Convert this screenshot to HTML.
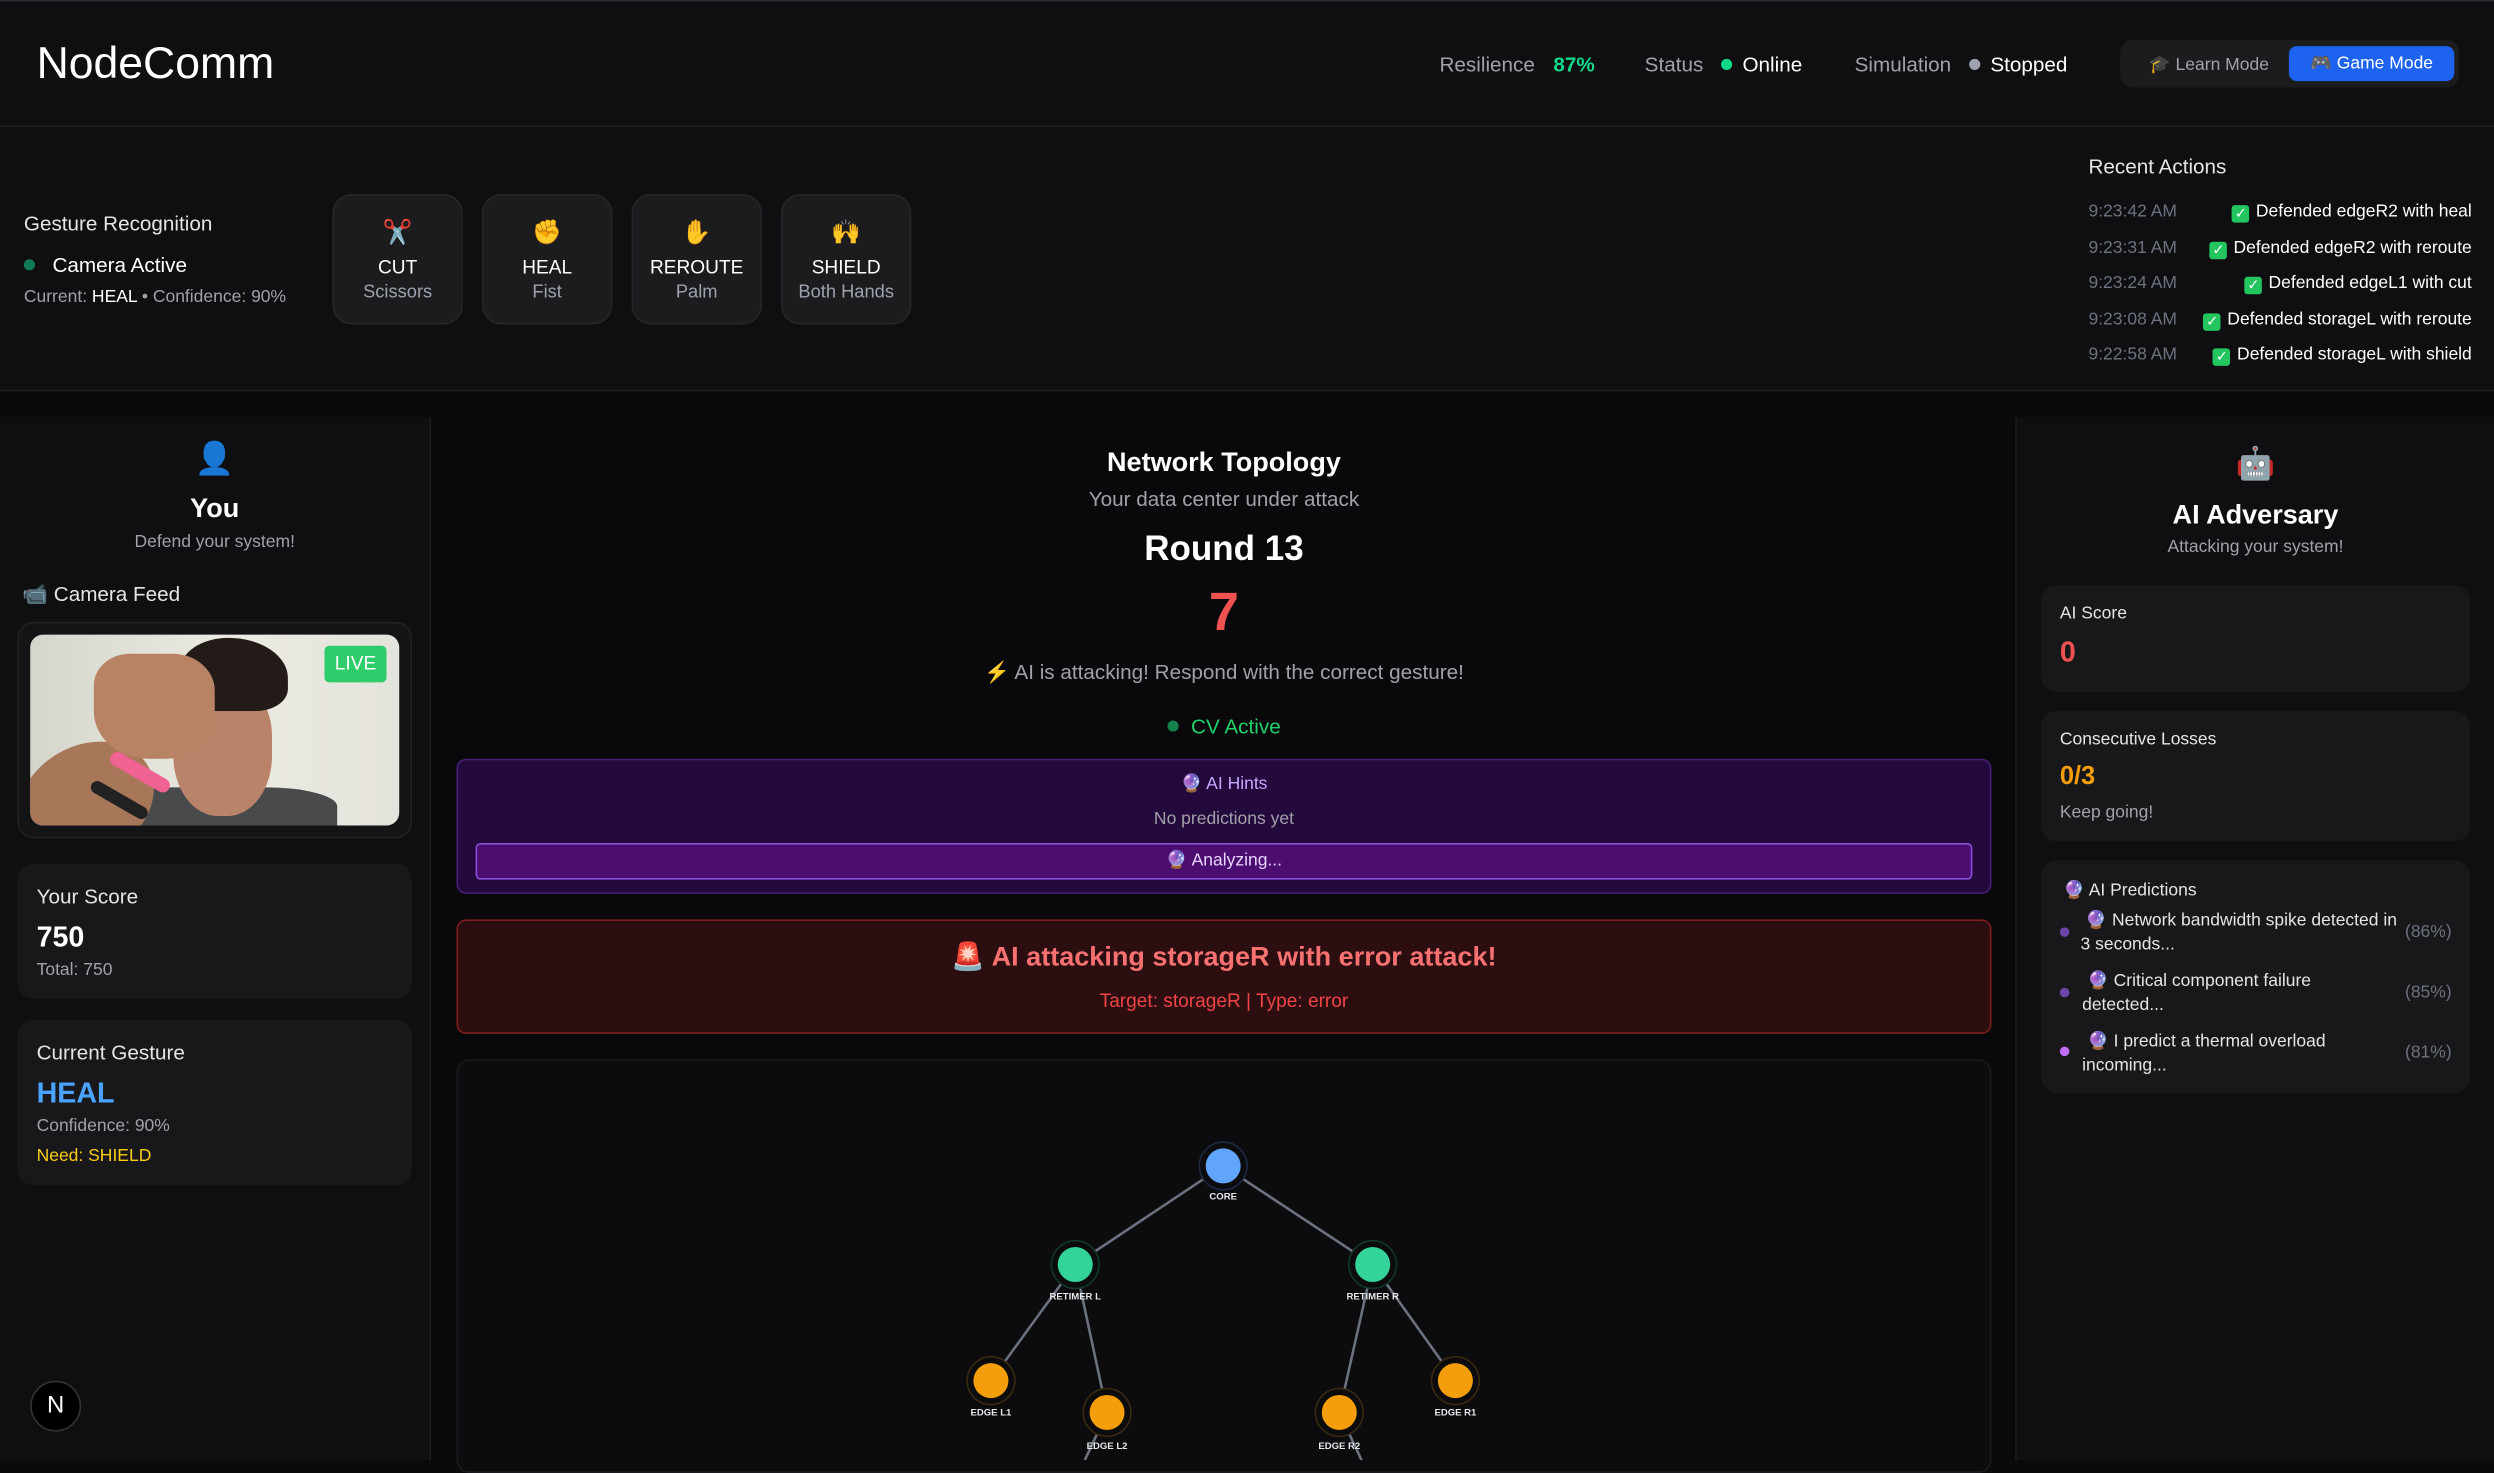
<!DOCTYPE html>
<html><head><meta charset="utf-8">
<style>
html,body{margin:0;padding:0;background:#0a0a0c;overflow:hidden}
body{width:2494px;height:1459px}
#s{position:absolute;left:0;top:0;width:1568px;height:918px;transform:scale(1.5906);transform-origin:0 0;font-family:"Liberation Sans",sans-serif;color:#fff;background:#09090b}
.a{position:absolute}
.c{text-align:center}
.card{position:absolute;background:#18181b;border-radius:10px}
.gc{position:absolute;top:122px;width:82px;height:82px;background:#1c1c1f;border:1px solid #26262a;border-radius:12px;text-align:center;box-sizing:border-box}
.gc .e{margin-top:14px;font-size:15px;height:20px}
.gc .t{font-size:12px;margin-top:4px}
.gc .s{font-size:11.5px;color:#9ca3af;margin-top:3px}
.ra{position:absolute;right:14px;font-size:11px;white-space:nowrap}
.tm{position:absolute;left:1313px;font-size:11px;color:#6b7280}
.chk{display:inline-block;width:11px;height:11px;background:#22c55e;border-radius:2px;color:#fff;font-size:9px;line-height:11px;text-align:center;vertical-align:-1px;margin-right:4px}
</style></head><body><div id="s">
<!-- header -->
<div class="a" style="left:0;top:0;width:1568px;height:80px;background:#0f0f11;border-top:1px solid #2a2a2e;border-bottom:1px solid #1f1f23;box-sizing:border-box"></div>
<div class="a" style="left:23px;top:24px;font-size:28px;color:#fff">NodeComm</div>
<div class="a" style="left:905px;top:33px;font-size:13px;color:#a1a1aa">Resilience <span style="color:#10d98a;font-weight:bold;margin-left:8px">87%</span></div>
<div class="a" style="left:1034px;top:33px;font-size:13px;color:#a1a1aa">Status <span style="display:inline-block;width:7px;height:7px;border-radius:50%;background:#10d98a;margin:0 6px 1px 8px"></span><span style="color:#fff">Online</span></div>
<div class="a" style="left:1166px;top:33px;font-size:13px;color:#a1a1aa">Simulation <span style="display:inline-block;width:7px;height:7px;border-radius:50%;background:#9ca3af;margin:0 6px 1px 8px"></span><span style="color:#fff">Stopped</span></div>
<div class="a" style="left:1333px;top:25px;width:213px;height:30px;background:#1c1c1f;border-radius:8px"></div>
<div class="a" style="left:1351px;top:34px;font-size:11px;color:#a1a1aa">🎓 Learn Mode</div>
<div class="a" style="left:1439px;top:29px;width:104px;height:22px;background:#1d63f0;border-radius:5px;font-size:11px;line-height:22px;text-align:center">🎮 Game Mode</div>
<!-- gesture band -->
<div class="a" style="left:0;top:80px;width:1568px;height:166px;background:#0f0f11;border-bottom:1px solid #1f1f23;box-sizing:border-box"></div>
<div class="a" style="left:15px;top:133px;font-size:13px;color:#e5e5e5">Gesture Recognition</div>
<div class="a" style="left:15px;top:159px;font-size:13px;color:#fff"><span style="display:inline-block;width:7px;height:7px;border-radius:50%;background:#0f7a55;margin-right:11px;vertical-align:1px"></span>Camera Active</div>
<div class="a" style="left:15px;top:181px;font-size:11px;color:#a1a1aa">Current: <span style="color:#fff">HEAL</span> • Confidence: 90%</div>
<div class="gc" style="left:209px"><div class="e">✂️</div><div class="t">CUT</div><div class="s">Scissors</div></div>
<div class="gc" style="left:303px"><div class="e">✊</div><div class="t">HEAL</div><div class="s">Fist</div></div>
<div class="gc" style="left:397px"><div class="e">✋</div><div class="t">REROUTE</div><div class="s">Palm</div></div>
<div class="gc" style="left:491px"><div class="e">🙌</div><div class="t">SHIELD</div><div class="s">Both Hands</div></div>
<div class="a" style="left:1313px;top:97px;font-size:13px;color:#e5e5e5">Recent Actions</div>
<div class="tm" style="top:127px">9:23:42 AM</div><div class="ra" style="top:127px"><span class="chk">✓</span>Defended edgeR2 with heal</div>
<div class="tm" style="top:150px">9:23:31 AM</div><div class="ra" style="top:150px"><span class="chk">✓</span>Defended edgeR2 with reroute</div>
<div class="tm" style="top:172px">9:23:24 AM</div><div class="ra" style="top:172px"><span class="chk">✓</span>Defended edgeL1 with cut</div>
<div class="tm" style="top:195px">9:23:08 AM</div><div class="ra" style="top:195px"><span class="chk">✓</span>Defended storageL with reroute</div>
<div class="tm" style="top:217px">9:22:58 AM</div><div class="ra" style="top:217px"><span class="chk">✓</span>Defended storageL with shield</div>
<!-- left panel -->
<div class="a" style="left:0;top:262px;width:270px;height:656px;background:#0f0f11;border-right:1px solid #1c1c1f"></div>
<div class="a c" style="left:0;top:276px;width:270px;font-size:20px">👤</div>
<div class="a c" style="left:0;top:310px;width:270px;font-size:17px;font-weight:bold">You</div>
<div class="a c" style="left:0;top:335px;width:270px;font-size:11px;color:#a1a1aa">Defend your system!</div>
<div class="a" style="left:14px;top:366px;font-size:13px;color:#e5e5e5">📹 Camera Feed</div>
<div class="card" style="left:11px;top:391px;width:248px;height:136px;background:#141416;border:1px solid #222226;box-sizing:border-box"></div>
<div class="a" style="left:19px;top:399px;width:232px;height:120px;border-radius:8px;overflow:hidden;background:linear-gradient(90deg,#d4d6cc,#ecebe2 55%,#e4e3dc)">
 <div class="a" style="left:43px;top:96px;width:150px;height:40px;border-radius:30% 30% 0 0;background:#484a4c"></div>
 <div class="a" style="left:90px;top:30px;width:62px;height:84px;border-radius:40% 40% 45% 45%;background:#b9836a"></div>
 <div class="a" style="left:94px;top:2px;width:68px;height:46px;border-radius:45% 55% 30% 20%;background:#231b17"></div>
 <div class="a" style="left:-10px;top:70px;width:90px;height:70px;border-radius:50%;background:#a87658;transform:rotate(-30deg)"></div>
 <div class="a" style="left:40px;top:12px;width:76px;height:66px;border-radius:30% 35% 40% 45%;background:#b88264"></div>
 <div class="a" style="left:48px;top:82px;width:42px;height:9px;background:#f06292;transform:rotate(30deg);border-radius:5px"></div>
 <div class="a" style="left:36px;top:100px;width:40px;height:8px;background:#222;transform:rotate(30deg);border-radius:4px"></div>
 <div class="a" style="left:185px;top:7px;width:39px;height:23px;background:#2ecc6a;border-radius:3px;font-size:12px;line-height:23px;text-align:center">LIVE</div>
</div>
<div class="card" style="left:11px;top:543px;width:248px;height:85px"></div>
<div class="a" style="left:23px;top:556px;font-size:13px;color:#e5e5e5">Your Score</div>
<div class="a" style="left:23px;top:579px;font-size:18px;font-weight:bold">750</div>
<div class="a" style="left:23px;top:604px;font-size:11px;color:#a1a1aa">Total: 750</div>
<div class="card" style="left:11px;top:641px;width:248px;height:104px"></div>
<div class="a" style="left:23px;top:654px;font-size:13px;color:#e5e5e5">Current Gesture</div>
<div class="a" style="left:23px;top:677px;font-size:18px;font-weight:bold;color:#4aa3ff">HEAL</div>
<div class="a" style="left:23px;top:702px;font-size:11px;color:#a1a1aa">Confidence: 90%</div>
<div class="a" style="left:23px;top:721px;font-size:11px;color:#facc15">Need: SHIELD</div>
<div class="a" style="left:19px;top:868px;width:32px;height:32px;border-radius:50%;background:#000;border:1px solid #333;box-sizing:border-box;font-size:15px;line-height:30px;text-align:center">N</div>
<!-- center -->
<div class="a c" style="left:287px;top:281px;width:965px;font-size:17px;font-weight:bold">Network Topology</div>
<div class="a c" style="left:287px;top:306px;width:965px;font-size:13px;color:#a1a1aa">Your data center under attack</div>
<div class="a c" style="left:287px;top:332px;width:965px;font-size:22px;font-weight:bold">Round 13</div>
<div class="a c" style="left:287px;top:366px;width:965px;font-size:34px;font-weight:bold;color:#f05252">7</div>
<div class="a c" style="left:287px;top:415px;width:965px;font-size:13px;color:#a1a1aa">⚡ AI is attacking! Respond with the correct gesture!</div>
<div class="a c" style="left:287px;top:449px;width:965px;font-size:13px;color:#22d06a"><span style="display:inline-block;width:7px;height:7px;border-radius:50%;background:#16804a;margin-right:8px;vertical-align:1px"></span>CV Active</div>
<div class="a" style="left:287px;top:477px;width:965px;height:85px;background:#240a3c;border:1px solid #4a1d7a;border-radius:6px;box-sizing:border-box"></div>
<div class="a c" style="left:287px;top:486px;width:965px;font-size:11px;color:#c4a8ff">🔮 AI Hints</div>
<div class="a c" style="left:287px;top:509px;width:965px;font-size:11px;color:#a1a1aa">No predictions yet</div>
<div class="a c" style="left:299px;top:530px;width:941px;height:23px;background:#4c0d70;border:1px solid #8b4fd8;border-radius:3px;box-sizing:border-box;font-size:11px;line-height:21px;color:#e9d5ff">🔮 Analyzing...</div>
<div class="a" style="left:287px;top:578px;width:965px;height:72px;background:#2c0d10;border:1px solid #7f1d1d;border-radius:6px;box-sizing:border-box"></div>
<div class="a c" style="left:287px;top:592px;width:965px;font-size:17px;font-weight:bold;color:#f87171">🚨 AI attacking storageR with error attack!</div>
<div class="a c" style="left:287px;top:622px;width:965px;font-size:12px;color:#ef4444">Target: storageR | Type: error</div>
<div class="a" style="left:287px;top:666px;width:965px;height:260px;background:#0c0c0e;border:1px solid #1c1c20;border-radius:8px;box-sizing:border-box"></div>
<svg class="a" style="left:0;top:0" width="1568" height="918">
 <g stroke="#6b7280" stroke-width="1.6">
  <line x1="769" y1="733" x2="676" y2="795"/><line x1="769" y1="733" x2="863" y2="795"/>
  <line x1="676" y1="795" x2="623" y2="868"/><line x1="676" y1="795" x2="696" y2="888"/>
  <line x1="863" y1="795" x2="842" y2="888"/><line x1="863" y1="795" x2="915" y2="868"/>
  <line x1="696" y1="888" x2="682" y2="918"/><line x1="842" y1="888" x2="856" y2="918"/>
 </g>
 <g fill="#0c0c0e" stroke-width="1"><circle cx="769" cy="733" r="15" stroke="#1e2a44"/><circle cx="676" cy="795" r="15" stroke="#123828"/><circle cx="863" cy="795" r="15" stroke="#123828"/><circle cx="623" cy="868" r="15" stroke="#3a2a10"/><circle cx="696" cy="888" r="15" stroke="#3a2a10"/><circle cx="842" cy="888" r="15" stroke="#3a2a10"/><circle cx="915" cy="868" r="15" stroke="#3a2a10"/></g>
 <circle cx="769" cy="733" r="11" fill="#60a5fa"/>
 <circle cx="676" cy="795" r="11" fill="#34d399"/><circle cx="863" cy="795" r="11" fill="#34d399"/>
 <g fill="#f59e0b"><circle cx="623" cy="868" r="11"/><circle cx="696" cy="888" r="11"/><circle cx="842" cy="888" r="11"/><circle cx="915" cy="868" r="11"/></g>
 <g fill="#e5e7eb" font-family="Liberation Sans" font-size="6" text-anchor="middle" font-weight="bold">
  <text x="769" y="754">CORE</text><text x="676" y="817">RETIMER L</text><text x="863" y="817">RETIMER R</text>
  <text x="623" y="890">EDGE L1</text><text x="696" y="911">EDGE L2</text><text x="842" y="911">EDGE R2</text><text x="915" y="890">EDGE R1</text>
 </g>
</svg>
<!-- right panel -->
<div class="a" style="left:1267px;top:262px;width:301px;height:656px;background:#0f0f11;border-left:1px solid #1c1c1f"></div>
<div class="a c" style="left:1268px;top:279px;width:300px;font-size:20px">🤖</div>
<div class="a c" style="left:1268px;top:314px;width:300px;font-size:17px;font-weight:bold">AI Adversary</div>
<div class="a c" style="left:1268px;top:338px;width:300px;font-size:11px;color:#a1a1aa">Attacking your system!</div>
<div class="card" style="left:1283px;top:368px;width:270px;height:67px"></div>
<div class="a" style="left:1295px;top:380px;font-size:11px;color:#e5e5e5">AI Score</div>
<div class="a" style="left:1295px;top:400px;font-size:18px;font-weight:bold;color:#f05252">0</div>
<div class="card" style="left:1283px;top:447px;width:270px;height:82px"></div>
<div class="a" style="left:1295px;top:459px;font-size:11px;color:#e5e5e5">Consecutive Losses</div>
<div class="a" style="left:1295px;top:480px;font-size:16px;font-weight:bold;color:#f59e0b">0/3</div>
<div class="a" style="left:1295px;top:505px;font-size:11px;color:#a1a1aa">Keep going!</div>
<div class="card" style="left:1283px;top:541px;width:270px;height:146px"></div>
<div class="a" style="left:1297px;top:553px;font-size:11px;color:#e5e5e5">🔮 AI Predictions</div>
<div class="a" style="left:1295px;top:583px;width:6px;height:6px;border-radius:50%;background:#6b46a8"></div>
<div class="a" style="left:1308px;top:572px;width:200px;font-size:11px;line-height:15px;color:#e5e5e5">&nbsp;🔮 Network bandwidth spike detected in 3 seconds...</div>
<div class="a" style="left:1512px;top:580px;font-size:11px;color:#6b7280">(86%)</div>
<div class="a" style="left:1295px;top:621px;width:6px;height:6px;border-radius:50%;background:#6b46a8"></div>
<div class="a" style="left:1309px;top:610px;width:180px;font-size:11px;line-height:15px;color:#e5e5e5">&nbsp;🔮 Critical component failure detected...</div>
<div class="a" style="left:1512px;top:618px;font-size:11px;color:#6b7280">(85%)</div>
<div class="a" style="left:1295px;top:658px;width:6px;height:6px;border-radius:50%;background:#c06cf5"></div>
<div class="a" style="left:1309px;top:648px;width:180px;font-size:11px;line-height:15px;color:#e5e5e5">&nbsp;🔮 I predict a thermal overload incoming...</div>
<div class="a" style="left:1512px;top:656px;font-size:11px;color:#6b7280">(81%)</div>
</div></body></html>
